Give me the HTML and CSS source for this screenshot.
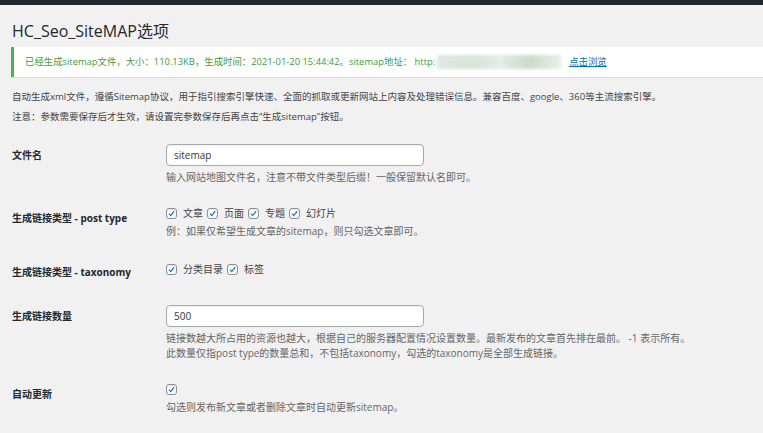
FILE: index.html
```html
<!DOCTYPE html>
<html lang="zh-CN">
<head>
    <meta charset="UTF-8">
    <meta name="viewport" content="width=device-width, initial-scale=1.0">
    <title>HC_Seo_SiteMAP选项</title>
    <link rel="stylesheet" href="styles.css">
</head>
<body>
    <div class="admin-bar"></div>

    <div class="wrap">
        <h1 class="page-title">HC_Seo_SiteMAP选项</h1>

        <div class="notice notice-success">
            已经生成sitemap文件，大小：110.13KB，生成时间：2021-01-20 15:44:42。sitemap地址： http:<span class="blurred-url"></span><a href="#" class="notice-link">点击浏览</a>
        </div>

        <p class="intro">自动生成xml文件，遵循Sitemap协议，用于指引搜索引擎快速、全面的抓取或更新网站上内容及处理错误信息。兼容百度、google、360等主流搜索引擎。</p>
        <p class="intro">注意：参数需要保存后才生效，请设置完参数保存后再点击“生成sitemap”按钮。</p>

        <div class="form-table">
            <div class="form-row">
                <div class="form-label">文件名</div>
                <div class="form-field">
                    <input type="text" class="text-input" value="sitemap">
                    <p class="description">输入网站地图文件名，注意不带文件类型后缀！一般保留默认名即可。</p>
                </div>
            </div>

            <div class="form-row">
                <div class="form-label">生成链接类型 - post type</div>
                <div class="form-field">
                    <div class="check-list">
                        <label class="check"><span class="check-box"><svg viewBox="0 0 12 12"><path d="M2.6 6.2 L5 8.6 L9.6 3"/></svg></span>文章</label>
                        <label class="check"><span class="check-box"><svg viewBox="0 0 12 12"><path d="M2.6 6.2 L5 8.6 L9.6 3"/></svg></span>页面</label>
                        <label class="check"><span class="check-box"><svg viewBox="0 0 12 12"><path d="M2.6 6.2 L5 8.6 L9.6 3"/></svg></span>专题</label>
                        <label class="check"><span class="check-box"><svg viewBox="0 0 12 12"><path d="M2.6 6.2 L5 8.6 L9.6 3"/></svg></span>幻灯片</label>
                    </div>
                    <p class="description check-desc">例：如果仅希望生成文章的sitemap，则只勾选文章即可。</p>
                </div>
            </div>

            <div class="form-row form-row-short">
                <div class="form-label">生成链接类型 - taxonomy</div>
                <div class="form-field">
                    <div class="check-list">
                        <label class="check"><span class="check-box"><svg viewBox="0 0 12 12"><path d="M2.6 6.2 L5 8.6 L9.6 3"/></svg></span>分类目录</label>
                        <label class="check"><span class="check-box"><svg viewBox="0 0 12 12"><path d="M2.6 6.2 L5 8.6 L9.6 3"/></svg></span>标签</label>
                    </div>
                </div>
            </div>

            <div class="form-row">
                <div class="form-label">生成链接数量</div>
                <div class="form-field">
                    <input type="text" class="text-input" value="500">
                    <p class="description">链接数越大所占用的资源也越大，根据自己的服务器配置情况设置数量。最新发布的文章首先排在最前。 -1 表示所有。<br>此数量仅指post type的数量总和，不包括taxonomy，勾选的taxonomy是全部生成链接。</p>
                </div>
            </div>

            <div class="form-row">
                <div class="form-label">自动更新</div>
                <div class="form-field">
                    <div class="check-list">
                        <label class="check"><span class="check-box"><svg viewBox="0 0 12 12"><path d="M2.6 6.2 L5 8.6 L9.6 3"/></svg></span></label>
                    </div>
                    <p class="description check-desc">勾选则发布新文章或者删除文章时自动更新sitemap。</p>
                </div>
            </div>
        </div>
    </div>
</body>
</html>
```

FILE: styles.css
```css
* {
    margin: 0;
    padding: 0;
    box-sizing: border-box;
}

body {
    background-color: #f1f1f1;
    font-family: 'Open Sans', 'Noto Sans CJK SC', sans-serif;
    font-size: 10px;
    color: #444;
    overflow: hidden;
}

.admin-bar {
    height: 5px;
    background-color: #23282d;
}

.wrap {
    padding-left: 12px;
}

.page-title {
    font-size: 16px;
    font-weight: normal;
    line-height: 22px;
    color: #23282d;
    margin-top: 15px;
    margin-bottom: 5px;
}

/* Notice */
.notice {
    margin-left: -1px;
    background: #fff;
    border-left: 3px solid #46b450;
    box-shadow: 0 1px 1px rgba(0, 0, 0, 0.08);
    padding: 7px 12px 7px 11px;
    font-size: 9.4px;
    line-height: 16px;
    height: 30px;
    color: #3f9a3f;
    white-space: nowrap;
}

.blurred-url {
    display: inline-block;
    vertical-align: middle;
    width: 124px;
    height: 14px;
    margin: 0 8px 0 2px;
    background: linear-gradient(to right, #e2e8e2, #d6e4d6 30%, #e6ece6 50%, #c9dcc9 75%, #e8efe8);
    filter: blur(1.5px);
}

.notice-link {
    color: #0073aa;
    text-decoration: underline;
}

/* Intro text */
.intro {
    font-size: 9.5px;
    line-height: 20px;
}

.notice + .intro {
    margin-top: 10px;
}

/* Form table */
.form-table {
    margin-top: 6px;
}

.form-row {
    display: flex;
    padding: 11px 0;
}

.form-row-short {
    padding: 13px 0 15px;
}

.form-label {
    width: 154px;
    flex-shrink: 0;
    line-height: 22px;
    font-weight: bold;
    color: #23282d;
}

.form-row-short .form-label {
    line-height: 14px;
    padding-top: 2px;
}

.text-input {
    display: block;
    width: 258px;
    height: 22px;
    border: 1px solid #a7aaad;
    border-radius: 4px;
    background: #fff;
    padding: 0 7px;
    font-family: 'Open Sans', 'Noto Sans CJK SC', sans-serif;
    font-size: 10px;
    color: #32373c;
    box-shadow: inset 0 1px 2px rgba(0, 0, 0, 0.07);
}

.description {
    margin-top: 4px;
    line-height: 15px;
    color: #666;
}

.check-desc {
    margin-top: 5px;
}

/* Checkboxes */
.check-list {
    display: flex;
    align-items: center;
    height: 12px;
}

.check {
    display: flex;
    align-items: center;
    margin-right: 4px;
    color: #444;
    line-height: 12px;
}

.check-box {
    width: 11px;
    height: 11px;
    border: 1px solid #8c8f94;
    border-radius: 3px;
    background: #fff;
    margin-right: 6px;
    box-shadow: inset 0 1px 2px rgba(0, 0, 0, 0.1);
}

.check-box svg {
    display: block;
    width: 9px;
    height: 9px;
    fill: none;
    stroke: #1e8cbe;
    stroke-width: 1.8;
}
```
